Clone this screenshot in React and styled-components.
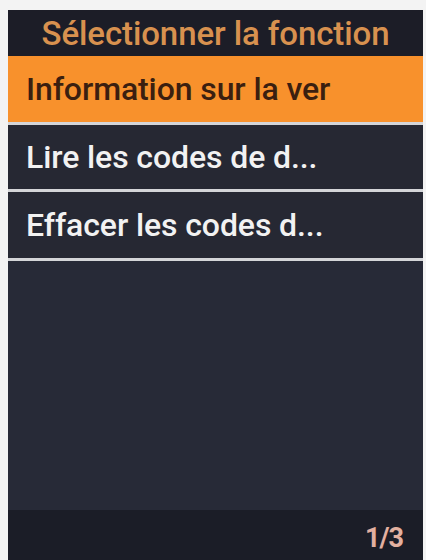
import React from "react";
import styled, { createGlobalStyle } from "styled-components";

const GlobalStyle = createGlobalStyle`
  html, body {
    margin: 0;
    padding: 0;
    background: #f3f3f3;
  }
  body {
    font-family: Roboto, "Noto Sans", sans-serif;
  }
`;

const Page = styled.div`
  width: 426px;
  height: 560px;
  padding: 10px 3px 0 8px;
  box-sizing: border-box;
`;

const Screen = styled.div`
  height: 100%;
  display: flex;
  flex-direction: column;
  background: #272a37;
`;

const Header = styled.div`
  height: 46px;
  flex-shrink: 0;
  display: flex;
  align-items: center;
  justify-content: center;
  background: #1c1d27;
  color: #d8914f;
  font-size: 33px;
  font-weight: 500;
  letter-spacing: -0.1px;
  white-space: nowrap;
`;

const Item = styled.div`
  height: ${(p) => p.$h}px;
  flex-shrink: 0;
  display: flex;
  align-items: center;
  padding-left: 18px;
  font-size: 32px;
  font-weight: 500;
  letter-spacing: -0.1px;
  white-space: nowrap;
  overflow: hidden;
  background: ${(p) => (p.$active ? "#f8912c" : "#262833")};
  color: ${(p) => (p.$active ? "#3b1f10" : "#f2f2f2")};
  border-bottom: 3px solid #d4d5d8;
`;

const Body = styled.div`
  flex: 1;
  background: #272a37;
`;

const Footer = styled.div`
  height: 50px;
  flex-shrink: 0;
  display: flex;
  align-items: center;
  justify-content: flex-end;
  padding: 6px 20px 0 0;
  box-sizing: border-box;
  background: #1b1d27;
  color: #e3b0a0;
  font-size: 27px;
  font-weight: 700;
  letter-spacing: -1px;
`;

const items = [
  { label: "Information sur la ver", h: 66 },
  { label: "Lire les codes de d...", h: 64 },
  { label: "Effacer les codes d...", h: 66 },
];

export default function App() {
  return (
    <>
      <GlobalStyle />
      <Page>
        <Screen>
          <Header>Sélectionner la fonction</Header>
          {items.map((it, i) => (
            <Item key={it.label} $h={it.h} $active={i === 0}>
              {it.label}
            </Item>
          ))}
          <Body />
          <Footer>1/3</Footer>
        </Screen>
      </Page>
    </>
  );
}
